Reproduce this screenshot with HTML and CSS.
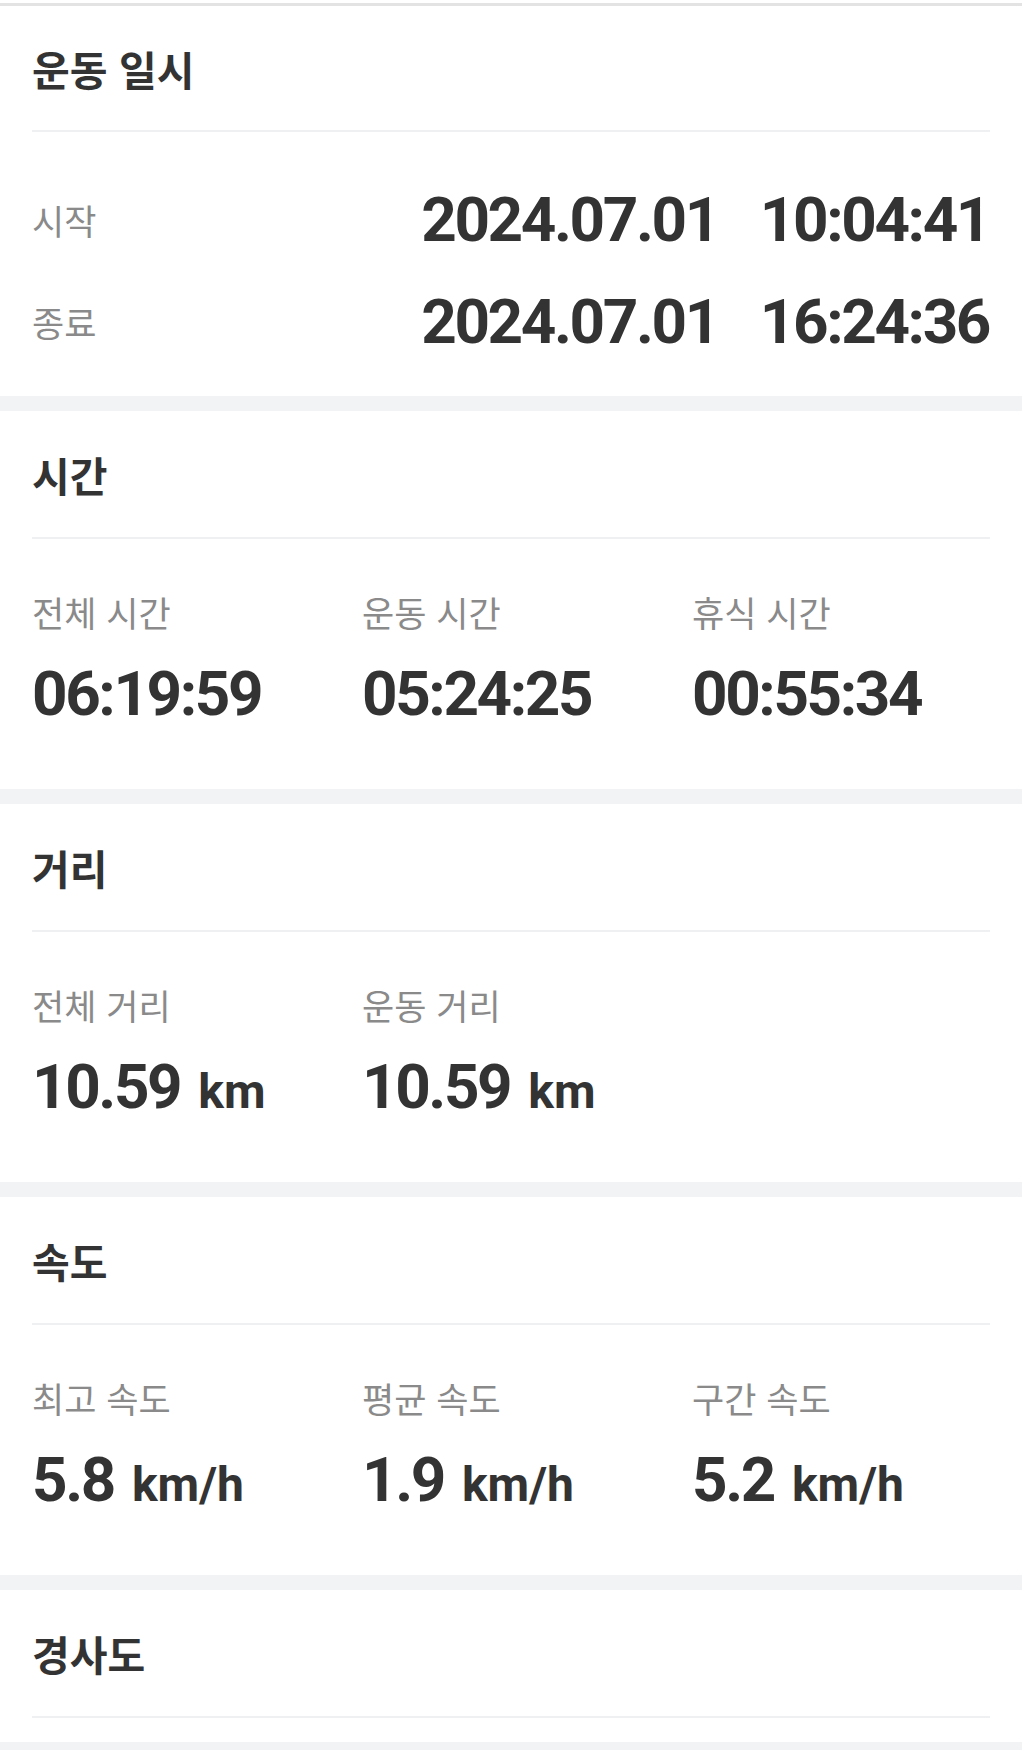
FILE: index.html
```html
<!DOCTYPE html>
<html lang="ko">
<head>
<meta charset="UTF-8" />
<meta name="viewport" content="width=device-width, initial-scale=1.0" />
<title>운동 기록</title>
<link rel="stylesheet" href="styles.css">
</head>
<body>

<div class="top-edge"></div>

<!-- 운동 일시 -->
<section class="card">
  <div class="card-header first">
    <h2>운동 일시</h2>
  </div>
  <div class="period">
    <div class="period-row">
      <span class="label">시작</span>
      <span class="value"><span>2024.07.01</span><span>10:04:41</span></span>
    </div>
    <div class="period-row">
      <span class="label">종료</span>
      <span class="value"><span>2024.07.01</span><span>16:24:36</span></span>
    </div>
  </div>
</section>

<!-- 시간 -->
<section class="card">
  <div class="card-header">
    <h2>시간</h2>
  </div>
  <div class="stats">
    <div class="stat">
      <span class="label">전체 시간</span>
      <span class="value">06:19:59</span>
    </div>
    <div class="stat">
      <span class="label">운동 시간</span>
      <span class="value">05:24:25</span>
    </div>
    <div class="stat">
      <span class="label">휴식 시간</span>
      <span class="value">00:55:34</span>
    </div>
  </div>
</section>

<!-- 거리 -->
<section class="card">
  <div class="card-header">
    <h2>거리</h2>
  </div>
  <div class="stats">
    <div class="stat">
      <span class="label">전체 거리</span>
      <span class="value">10.59<span class="unit">km</span></span>
    </div>
    <div class="stat">
      <span class="label">운동 거리</span>
      <span class="value">10.59<span class="unit">km</span></span>
    </div>
  </div>
</section>

<!-- 속도 -->
<section class="card">
  <div class="card-header">
    <h2>속도</h2>
  </div>
  <div class="stats">
    <div class="stat">
      <span class="label">최고 속도</span>
      <span class="value">5.8<span class="unit">km/h</span></span>
    </div>
    <div class="stat">
      <span class="label">평균 속도</span>
      <span class="value">1.9<span class="unit">km/h</span></span>
    </div>
    <div class="stat">
      <span class="label">구간 속도</span>
      <span class="value">5.2<span class="unit">km/h</span></span>
    </div>
  </div>
</section>

<!-- 경사도 -->
<section class="card">
  <div class="card-header">
    <h2>경사도</h2>
  </div>
  <div class="card-empty"></div>
</section>

</body>
</html>
```

FILE: styles.css
```css
/* Общие */
body {
  margin: 0;
  background-color: #f2f3f5;
  font-family: "Noto Sans CJK KR", "Noto Sans", sans-serif;
  color: #333;
}

.top-edge {
  height: 3px;
  background-color: #fff;
  border-bottom: 3px solid #e3e3e3;
}

/* Карточка-секция */
.card {
  background-color: #fff;
  margin-bottom: 15px;
}

.card-header {
  height: 126px;
  margin: 0 32px;
  display: flex;
  align-items: center;
  border-bottom: 2px solid #eff0f2;
}

.card-header.first {
  height: 124px;
}

.card-header h2 {
  margin: 0;
  font-size: 41px;
  font-weight: 700;
  line-height: 48px;
  color: #333;
}

.card-empty {
  height: 24px;
}

.label {
  font-size: 35px;
  line-height: 40px;
  color: #8a8a8a;
}

.value {
  font-family: Roboto, "Liberation Sans", sans-serif;
  font-weight: 700;
  font-size: 62px;
  line-height: 70px;
  letter-spacing: -2.4px;
  color: #333;
}

.unit {
  font-size: 48px;
  line-height: 1;
  letter-spacing: 0;
  margin-left: 18px;
}

/* Начало / конец */
.period {
  padding: 53px 33px 39px 32px;
  display: flex;
  flex-direction: column;
  gap: 32px;
}

.period-row {
  display: flex;
  justify-content: space-between;
  align-items: center;
}

.period-row .value {
  display: flex;
  gap: 42px;
}

/* Сетка показателей */
.stats {
  display: grid;
  grid-template-columns: repeat(3, 330px);
  padding: 53px 0 60px 32px;
}

.stat {
  display: flex;
  flex-direction: column;
  gap: 27px;
}
```
